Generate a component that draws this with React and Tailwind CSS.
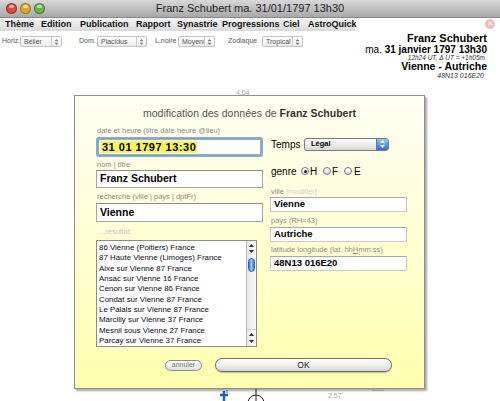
import React from 'react'

const cities = [
  '86 Vienne (Poitiers) France',
  '87 Haute Vienne (Limoges) France',
  'Aixe sur Vienne 87 France',
  'Ansac sur Vienne 16 France',
  'Cenon sur Vienne 86 France',
  'Condat sur Vienne 87 France',
  'Le Palais sur Vienne 87 France',
  'Marcilly sur Vienne 37 France',
  'Mesnil sous Vienne 27 France',
  'Parcay sur Vienne 37 France',
]

const menus = [
  ['Thème', 'w-[36px]'],
  ['Edition', 'w-[39px]'],
  ['Publication', 'w-[56px]'],
  ['Rapport', 'w-[41px]'],
  ['Synastrie', 'w-[45px]'],
  ['Progressions', 'w-[61px]'],
  ['Ciel', 'w-[25px]'],
  ['AstroQuick', 'w-[47px]'],
]

function Light({ color }) {
  return (
    <div className={`relative h-[11px] w-[11px] rounded-full border border-black/30 ${color}`}>
      <div className="mx-auto mt-[1px] h-[3px] w-[5px] rounded-full bg-white/60" />
    </div>
  )
}

function UpDown({ className = 'fill-[#555]' }) {
  return (
    <svg width="5" height="8" viewBox="0 0 5 8" className={className}>
      <path d="M2.5 0 L5 3 L0 3 Z" />
      <path d="M0 5 L5 5 L2.5 8 Z" />
    </svg>
  )
}

function MiniSelect({ label, value, labelW, selectW, ml }) {
  return (
    <div className={`flex items-center ${ml}`}>
      <span className={`${labelW} text-[7px] whitespace-nowrap text-[#555]`}>{label}</span>
      <div className={`${selectW} flex h-[11px] items-center rounded-[2px] border border-[#c4c4c4] bg-linear-to-b from-white to-[#ececec]`}>
        <span className="flex-1 overflow-hidden pl-[3px] text-[7px] leading-[9px] whitespace-nowrap text-[#555]">{value}</span>
        <div className="flex h-full w-[10px] shrink-0 items-center justify-center border-l border-[#d0d0d0]">
          <UpDown className="fill-[#777] scale-75" />
        </div>
      </div>
    </div>
  )
}

function Field({ label, extra }) {
  return (
    <div className="h-[10px] pl-[1px] text-[7.5px] leading-[10px] text-[#8e8e8e] whitespace-nowrap">
      {label}
      {extra}
    </div>
  )
}

function Radio({ checked }) {
  return (
    <div className="flex h-[8px] w-[8px] items-center justify-center rounded-full border border-[#777] bg-linear-to-b from-white to-[#dcdcdc]">
      {checked && <div className="h-[3px] w-[3px] rounded-full bg-[#222]" />}
    </div>
  )
}

export default function App() {
  return (
    <div className="relative h-[401px] w-[500px] overflow-hidden bg-white font-['Liberation_Sans',Arial,sans-serif] text-black">
      {/* window title bar */}
      <div className="grid h-[18px] grid-cols-[1fr_auto_1fr] items-center border-b border-[#8a8a8a] bg-linear-to-b from-[#d8d8d8] to-[#a8a8a8]">
        <div className="flex gap-[3px] pl-[6px]">
          <Light color="bg-[#e2463f]" />
          <Light color="bg-[#e1a52b]" />
          <Light color="bg-[#6cb245]" />
        </div>
        <span className="text-[11px] text-[#222]">Franz Schubert ma. 31/01/1797 13h30</span>
        <div />
      </div>

      {/* menu row */}
      <div className="flex h-[13px] items-center">
        <div className="flex h-full w-[355px] items-center bg-linear-to-b from-[#f6f6f6] to-[#d9d9d9] pl-[5px]">
          {menus.map(([m, w]) => (
            <span key={m} className={`${w} text-[9px] leading-[13px] font-bold whitespace-nowrap text-[#111]`}>
              {m}
            </span>
          ))}
        </div>
        <div className="ml-auto mr-[5px] mb-[2px] flex h-[10px] w-[10px] items-center justify-center rounded-full bg-[#f2bcbc]">
          <span className="text-[8px] leading-[8px] font-bold text-white">×</span>
        </div>
      </div>

      {/* settings + header */}
      <div className="flex items-start justify-between">
        <div className="mt-[5px] flex pl-[2px]">
          <MiniSelect label="Horiz." value="Bélier" labelW="w-[18px]" selectW="w-[42px]" ml="" />
          <MiniSelect label="Dom." value="Placidus" labelW="w-[18px]" selectW="w-[50px]" ml="ml-[17px]" />
          <MiniSelect label="L.noire" value="Moyenne" labelW="w-[23px]" selectW="w-[37px]" ml="ml-[8px]" />
          <MiniSelect label="Zodiaque" value="Tropical" labelW="w-[34px]" selectW="w-[41px]" ml="ml-[13px]" />
        </div>
        <div className="pr-[13px] pt-[2px] text-right">
          <div className="h-[11px] text-[11px] leading-[11px] font-bold">Franz Schubert</div>
          <div className="h-[11px] text-[10px] leading-[11px]">
            ma. <b>31 janvier 1797 13h30</b>
          </div>
          <div className="h-[5px] pr-[2px] text-[6.5px] leading-[5px] italic text-[#333]">12h24 UT, Δ UT = +1h05m</div>
          <div className="h-[12px] pt-[1px] text-[10.5px] leading-[11px] font-bold">Vienne - Autriche</div>
          <div className="h-[8px] pr-[3px] text-[7px] leading-[8px] italic text-[#333]">48N13 016E20</div>
        </div>
      </div>

      {/* chart canvas bits */}
      <span className="absolute left-[236px] top-[88px] text-[7px] text-[#aaa]">4.04</span>
      <span className="absolute left-[328px] top-[391px] text-[7px] text-[#aaa]">2.57</span>
      <div className="absolute left-[372px] top-[390px] h-px w-[12px] bg-[#ccc]" />
      <svg className="absolute left-[219px] top-[389px]" width="50" height="12" viewBox="0 0 50 12">
        <path d="M5 2 V12 M1 6 H9" stroke="#1f62b8" strokeWidth="2.5" />
        <path d="M37 0 V12" stroke="#222" strokeWidth="1" />
        <circle cx="37" cy="14" r="8" fill="none" stroke="#222" strokeWidth="1" />
        <path d="M8 1 V4" stroke="#444" strokeWidth="0.7" />
      </svg>

      {/* dialog */}
      <div className="absolute left-[74px] top-[95px] h-[294px] w-[351px] border border-[#8f8f8f] bg-linear-to-b from-[#fefef3] to-[#ffffae] shadow-[2px_2px_2px_rgba(0,0,0,0.35)]">
        <div className="pt-[11px] text-center text-[10.5px] leading-[12px] text-[#555]">
          modification des données de <b className="text-[#333]">Franz Schubert</b>
        </div>

        <div className="mt-[7px] flex pl-[21px]">
          {/* left column */}
          <div className="w-[167px]">
            <Field label="date et heure (titre date heure @lieu)" />
            <div className="mt-[1px] h-[20px] rounded-[3px] border-2 border-[#86a8d4] bg-white">
              <div className="flex h-full items-center border border-[#9aa] pl-[2px]">
                <span className="bg-[#fcf35e] px-[1px] text-[11px] leading-[12px] font-bold tracking-[0.5px]">31 01 1797 13:30</span>
              </div>
            </div>

            <div className="mt-[3px]">
              <Field label="nom | titre" />
            </div>
            <div className="flex h-[18px] items-center border border-[#a5a5a5] border-t-[#8c8c8c] bg-white pl-[3px] text-[10.5px] font-bold">
              Franz Schubert
            </div>

            <div className="mt-[4px]">
              <Field label="recherche (ville | pays | dptFr)" />
            </div>
            <div className="mt-[1px] flex h-[19px] items-center border border-[#a5a5a5] border-t-[#8c8c8c] bg-white pl-[3px] text-[10.5px] font-bold">
              Vienne
            </div>

            <div className="mt-[5px] h-[10px] pl-[3px] text-[7.5px] leading-[10px] text-[#c8c8c8]">...résultat:</div>

            <div className="mt-[3px] flex h-[107px] w-[161px] border border-[#8c8c8c] bg-white">
              <div className="flex-1 pt-[2px] pl-[2px]">
                {cities.map((c) => (
                  <div key={c} className="h-[10.35px] text-[7.9px] leading-[10.35px] whitespace-nowrap text-[#0d0d20]">
                    {c}
                  </div>
                ))}
              </div>
              <div className="flex w-[10px] flex-col border-l border-[#bbb] bg-linear-to-r from-[#e8e8e8] to-[#fafafa]">
                <div className="flex flex-col items-center gap-[3px] pt-[3px]">
                  <svg width="5" height="3" viewBox="0 0 5 3"><path d="M2.5 0 L5 3 L0 3 Z" fill="#333" /></svg>
                  <svg width="5" height="3" viewBox="0 0 5 3"><path d="M0 0 L5 0 L2.5 3 Z" fill="#333" /></svg>
                </div>
                <div className="mx-auto mt-[5px] h-[14px] w-[7px] rounded-full border border-[#2a5fb0] bg-linear-to-r from-[#3c7ad8] via-[#9ec4f2] to-[#3c7ad8]" />
                <div className="flex-1" />
                <div className="flex flex-col items-center gap-[4px] border-t border-[#ccc] pb-[3px] pt-[3px]">
                  <svg width="5" height="3" viewBox="0 0 5 3"><path d="M2.5 0 L5 3 L0 3 Z" fill="#333" /></svg>
                  <svg width="5" height="3" viewBox="0 0 5 3"><path d="M0 0 L5 0 L2.5 3 Z" fill="#333" /></svg>
                </div>
              </div>
            </div>
          </div>

          {/* right column */}
          <div className="ml-[7px] w-[137px] pt-[11px]">
            <div className="flex h-[14px] items-center">
              <span className="w-[34px] pl-[1px] text-[10px]">Temps</span>
              <div className="flex h-[13px] w-[85px] items-center overflow-hidden rounded-[3px] border border-[#7c7c7c] bg-linear-to-b from-white to-[#d8d8d8]">
                <span className="flex-1 pl-[6px] text-[7.5px] font-bold">Légal</span>
                <div className="flex h-full w-[12px] items-center justify-center border-l border-[#4a78b8] bg-linear-to-b from-[#9cc4f4] to-[#2c6bd0]">
                  <UpDown className="fill-white" />
                </div>
              </div>
            </div>

            <div className="mt-[13px] flex h-[14px] items-center text-[10px]">
              <span className="w-[31px] pl-[1px]">genre</span>
              <Radio checked />
              <span className="ml-[1px] w-[13px]">H</span>
              <Radio />
              <span className="ml-[1px] w-[12px]">F</span>
              <Radio />
              <span className="ml-[2px]">E</span>
            </div>

            <div className="mt-[9px]">
              <Field label="ville " extra={<span className="text-[#cfcfcf]">[modifier]</span>} />
            </div>
            <div className="flex h-[15px] items-center border border-[#c9c9c9] border-t-[#a9a9a9] bg-white pl-[3px] text-[9.5px] font-bold">
              Vienne
            </div>

            <div className="mt-[4px]">
              <Field label="pays (RH=43)" />
            </div>
            <div className="mt-[1px] flex h-[15px] items-center border border-[#c9c9c9] border-t-[#a9a9a9] bg-white pl-[3px] text-[9.5px] font-bold">
              Autriche
            </div>

            <div className="mt-[3px]">
              <Field
                label={
                  <>
                    latitude longitude (lat. hh<span className="underline">H</span>mm:ss)
                  </>
                }
              />
            </div>
            <div className="mt-[1px] flex h-[15px] items-center border border-[#c9c9c9] border-t-[#a9a9a9] bg-white pl-[3px] text-[9.5px] font-bold">
              48N13 016E20
            </div>
          </div>
        </div>

        {/* buttons */}
        <div className="mt-[11px] flex h-[14px] items-center pl-[90px]">
          <div className="flex h-[11px] w-[37px] items-center justify-center rounded-full border border-[#8c8c8c] bg-linear-to-b from-white to-[#dedede] text-[7px] text-[#777]">
            annuler
          </div>
          <div className="ml-[13px] flex h-[14px] w-[177px] items-center justify-center rounded-full border border-[#6f6f6f] bg-linear-to-b from-white via-[#f2f2f2] to-[#d4d4d4] text-[8.5px] text-[#111] shadow-[0_1px_1px_rgba(0,0,0,0.25)]">
            OK
          </div>
        </div>
      </div>
    </div>
  )
}
